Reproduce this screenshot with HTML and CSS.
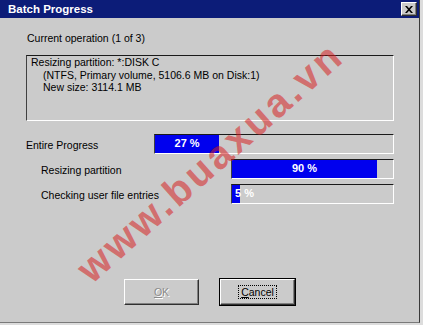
FILE: index.html
```html
<!DOCTYPE html>
<html>
<head>
<meta charset="utf-8">
<link rel="stylesheet" href="styles.css">
</head>
<body>
<div class="window">
  <div class="titlebar">
    <span class="title">Batch Progress</span>
    <span class="close"><svg width="8" height="7" viewBox="0 0 8 7"><path d="M0 0h2l2 2.2L6 0h2L5 3.5 8 7H6L4 4.8 2 7H0l3-3.5z" fill="#000"/></svg></span>
  </div>
  <div class="content">
    <div class="op-label">Current operation (1 of 3)</div>
    <div class="op-box">
      <div>Resizing partition: *:DISK C</div>
      <div class="indent">(NTFS, Primary volume, 5106.6 MB on Disk:1)</div>
      <div class="indent">New size: 3114.1 MB</div>
    </div>
    <div class="progress-list">
      <div class="prow">
        <span class="plabel">Entire Progress</span>
        <div class="bar wide"><div class="fill" style="width:27%"><span class="ptext">27 %</span></div></div>
      </div>
      <div class="prow">
        <span class="plabel sub">Resizing partition</span>
        <div class="bar"><div class="fill" style="width:90%"><span class="ptext">90 %</span></div></div>
      </div>
      <div class="prow">
        <span class="plabel sub">Checking user file entries</span>
        <div class="bar"><div class="fill start" style="width:5%"><span class="ptext">5 %</span></div></div>
      </div>
    </div>
    <div class="buttons">
      <div class="btn disabled"><span><u>O</u>K</span></div>
      <div class="btn default"><span class="focus"><u>C</u>ancel</span></div>
    </div>
  </div>
  <div class="watermark">www.buaxua.vn</div>
</div>
</body>
</html>
```
FILE: styles.css
```css
body {
  margin: 0;
  background: #dcdcdc;
  font-family: "Liberation Sans", Arial, sans-serif;
  font-size: 10.5px;
  color: #000;
}
.window {
  position: relative;
  width: 419px;
  height: 322px;
  background: #cbcbcb;
  border-right: 1px solid #3a3a3a;
  border-bottom: 1px solid #7a7a7a;
  box-shadow: 0 1px 0 #c4c4c4, 0 2px 0 #000;
  overflow: hidden;
}
.titlebar {
  height: 18px;
  background: #0c1c78;
  display: flex;
  align-items: center;
  padding: 0 2px 0 8px;
}
.title {
  flex: 1;
  color: #fff;
  font-weight: bold;
  font-size: 11.5px;
}
.close {
  width: 14px;
  height: 12px;
  background: #cbcbcb;
  border: 1px solid;
  border-color: #fff #303030 #303030 #fff;
  box-shadow: inset -1px -1px 0 #808080;
  display: flex;
  align-items: center;
  justify-content: center;
}
.close svg { display: block; margin-left: -1px; }
.content {
  padding: 14px 25px 0 26px;
}
.op-label {
  line-height: 13px;
  padding-left: 1px;
}
.op-box {
  margin-top: 10px;
  height: 64px;
  border: 1px solid;
  border-color: #1a1a1a #fff #fff #404040;
  padding: 0 4px;
  line-height: 12.5px;
}
.indent { padding-left: 12px; }
.progress-list {
  margin-top: 13px;
  display: flex;
  flex-direction: column;
  gap: 5px;
}
.prow {
  display: flex;
  align-items: center;
  justify-content: space-between;
}
.plabel { padding-top: 2px; }
.plabel.sub { padding-left: 15px; }
.bar {
  width: 161px;
  height: 18px;
  border: 1px solid;
  border-color: #1a1a1a #fff #fff #404040;
  display: flex;
}
.bar.wide { width: 238px; }
.fill {
  background: #0000ee;
  display: flex;
  align-items: center;
  justify-content: center;
  white-space: nowrap;
}
.fill.start {
  justify-content: flex-start;
  padding-left: 3px;
  box-sizing: border-box;
}
.ptext {
  color: #fff;
  font-weight: bold;
  font-size: 11px;
  margin-top: -2px;
}
.buttons {
  margin-top: 75px;
  display: flex;
  justify-content: center;
  gap: 21px;
  padding-right: 1px;
}
.btn {
  width: 73px;
  height: 24px;
  border: 1px solid;
  border-color: #fff #303030 #303030 #fff;
  box-shadow: inset -1px -1px 0 #808080;
  display: flex;
  align-items: center;
  justify-content: center;
}
.btn.disabled span {
  color: #8a8a8a;
  text-shadow: 1px 1px 0 #fff;
}
.btn.default {
  outline: 1px solid #000;
}
.focus {
  border: 1px dotted #000;
  padding: 1px 2px;
  line-height: 10px;
}
.watermark {
  position: absolute;
  left: 210px;
  top: 162px;
  transform: translate(-50%, -50%) rotate(-41.5deg);
  font-family: "Liberation Sans", Arial, sans-serif;
  font-weight: bold;
  font-size: 40px;
  letter-spacing: 3px;
  color: rgba(215, 30, 30, 0.55);
  white-space: nowrap;
  pointer-events: none;
}
```
